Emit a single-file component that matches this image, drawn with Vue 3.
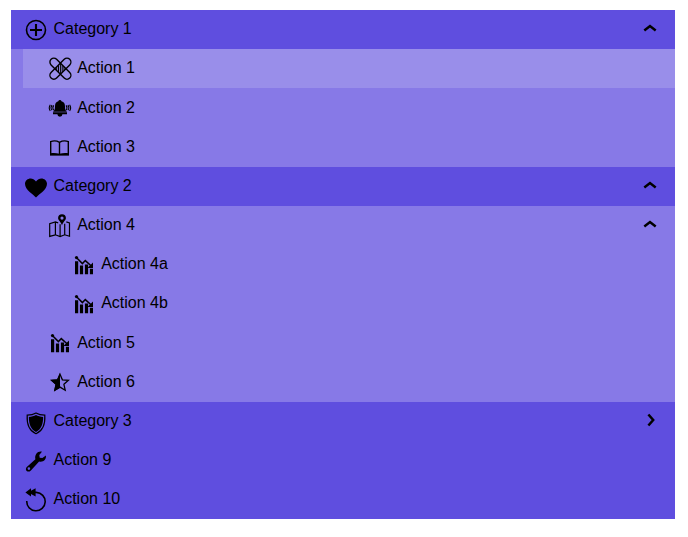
<script setup>
const rows = [
  { label: 'Category 1', icon: 'plus', level: 0, top: true, chevron: 'up' },
  { label: 'Action 1', icon: 'bandage', level: 1, active: true },
  { label: 'Action 2', icon: 'bell', level: 1 },
  { label: 'Action 3', icon: 'book', level: 1 },
  { label: 'Category 2', icon: 'heart', level: 0, top: true, chevron: 'up' },
  { label: 'Action 4', icon: 'map', level: 1, chevron: 'up' },
  { label: 'Action 4a', icon: 'chart', level: 2 },
  { label: 'Action 4b', icon: 'chart', level: 2 },
  { label: 'Action 5', icon: 'chart', level: 1 },
  { label: 'Action 6', icon: 'star', level: 1 },
  { label: 'Category 3', icon: 'shield', level: 0, top: true, chevron: 'right' },
  { label: 'Action 9', icon: 'wrench', level: 0, top: true },
  { label: 'Action 10', icon: 'undo', level: 0, top: true },
]
</script>

<template>
  <nav class="menu">
    <div
      v-for="row in rows"
      :key="row.label"
      class="row"
      :class="['level-' + row.level, { top: row.top, active: row.active }]"
    >
      <div class="item">
        <svg class="icon" viewBox="0 0 24 24" fill="none" stroke="#000">
          <g v-if="row.icon === 'plus'">
            <circle cx="12" cy="12" r="9.5" stroke-width="1.6" />
            <path d="M12 6v12M6 12h12" stroke-width="2.1" />
          </g>
          <g v-else-if="row.icon === 'bandage'" stroke-width="1.4">
            <rect x="-.8" y="7.8" width="26.4" height="7.8" rx="3.9" transform="rotate(45 12.4 11.7)" />
            <rect x="-.8" y="7.8" width="26.4" height="7.8" rx="3.9" transform="rotate(-45 12.4 11.7)" />
            <path d="M8.7 10v3.4M10.5 8.2v7M12.4 6.5v10.4M14.2 8.2v7M16 10v3.4" stroke-width="1" />
          </g>
          <g v-else-if="row.icon === 'bell'">
            <path d="M10.3 5.2a1.7 1.7 0 0 1 3.2 0c2.5.7 3.5 2.4 3.5 5.2 0 2.7.3 3.8 2 5.3H5c1.6-1.5 2-2.6 2-5.3 0-2.8.9-4.5 3.3-5.2z" fill="#000" stroke="none" />
            <path d="M5 16.3h14v2H5zM9.4 18.2h5a2.5 2.5 0 0 1-5 0z" fill="#000" stroke="none" />
            <path d="M5.7 9.4c-1 1.4-1 3.4 0 4.8M4 9.2c-1.1 1.4-1.1 3.6 0 5M2.3 8.7c-1.3 1.9-1.3 4.3 0 6.2M18.1 9.4c1 1.4 1 3.4 0 4.8M19.9 9.2c1.1 1.4 1.1 3.6 0 5M21.6 8.7c1.3 1.9 1.3 4.3 0 6.2" stroke-width="1.1" />
          </g>
          <g v-else-if="row.icon === 'book'">
            <path d="M2.7 6.6c3-1.1 6.1-.8 8.8.7 2.7-1.5 5.8-1.8 8.8-.7v13H2.7zM11.5 7.3v12" stroke-width="1.4" />
            <path d="M2 18.4c3.2-.8 6.4-.5 9.5.4 3.1-.9 6.3-1.2 9.5-.4v2.2H2z" fill="#000" stroke="none" />
          </g>
          <path v-else-if="row.icon === 'heart'" d="M12 22.6C9.8 19.7 1 15.2 1 8.8 1 3.4 8.4 1 12 6.5 15.6 1 23 3.4 23 8.8c0 6.4-8.8 10.9-11 13.8z" fill="#000" stroke="none" />
          <g v-else-if="row.icon === 'map'">
            <path d="M10.2 8.8L7.4 8 1.7 9.7v12.7l5.7-1.6 4.7 1.7 4.6-1.7 4.8 1.5V8.9l-3.2-1M7.4 8v12.8M12.1 10.3v12.2M16.7 9.8v11" stroke-width="1.2" />
            <path d="M14 .2a3.9 3.9 0 0 0-3.9 3.9c0 2.6 3.1 3.8 3.9 7.5.8-3.7 3.9-4.9 3.9-7.5A3.9 3.9 0 0 0 14 .2zm0 2.3a1.6 1.6 0 1 1 0 3.2 1.6 1.6 0 0 1 0-3.2z" fill="#000" fill-rule="evenodd" stroke="none" />
          </g>
          <g v-else-if="row.icon === 'chart'">
            <path d="M3 8.3h3.2v12.9H3zM7.9 12.4h3.2v8.8H7.9zM12.9 11.6h3.2v9.6h-3.2zM17.9 15.7h3.1v5.5h-3.1z" fill="#000" stroke="none" />
            <path d="M4.4 4.4l6 6.2 2.9-3 6 5.4" stroke-width="1.5" />
            <circle cx="4.5" cy="4.6" r="1.6" fill="#000" stroke="none" />
            <path d="M21 9.4v5.6h-5.6z" fill="#000" stroke="none" />
          </g>
          <g v-else-if="row.icon === 'star'">
            <path d="M12 4.2l2.4 5.6 6 .5-4.5 4 1.3 5.9-5.2-3.1-5.2 3.1 1.3-5.9-4.5-4 6-.5z" stroke-width="1.3" />
            <path d="M12 3L9.2 9.3l-6.8.6 5.1 4.6L6 21.4l6-3.7z" fill="#000" stroke="none" />
          </g>
          <g v-else-if="row.icon === 'shield'">
            <path d="M12 3.1C9.7 4.5 6.5 5.2 3.2 5.2c-.5 8 1.7 15.3 8.8 18.5 7.1-3.2 9.3-10.5 8.8-18.5-3.3 0-6.5-.7-8.8-2.1z" stroke-width="1.2" />
            <path d="M12 5C10.1 6.1 7.5 6.8 4.9 6.9c-.1 6.8 1.7 12.3 7.1 15 5.4-2.7 7.2-8.2 7.1-15C16.5 6.8 13.9 6.1 12 5z" fill="#000" stroke="none" />
          </g>
          <path v-else-if="row.icon === 'wrench'" d="M17.9 2.7l-2.6 3.4.4 2.6 2.7.3 3.5-2.4c.7 4.5-3.1 6.9-6.8 5.9L6.9 21.4c-2.9 3.1-6.7-.3-4.1-3.5l8.6-7.6c-1.1-4.6 2.4-8.5 6.5-7.6zM4.9 18.3a1.3 1.3 0 1 0 0 2.6 1.3 1.3 0 0 0 0-2.6z" fill="#000" fill-rule="evenodd" stroke="none" />
          <g v-else-if="row.icon === 'undo'">
            <path d="M11 4.4h1.3A9.2 9.2 0 1 1 2.8 13" stroke-width="1.6" />
            <path d="M1.4 4.4L7 .2v2.6L11.6.2v8.4L7 6v2.6z" fill="#000" stroke="none" />
          </g>
        </svg>
        <span class="label">{{ row.label }}</span>
        <svg v-if="row.chevron" class="chevron" viewBox="0 0 16 16" fill="none" stroke="#000" stroke-width="2.5">
          <path v-if="row.chevron === 'up'" d="M2.3 10.4L8 6l5.7 4.4" />
          <path v-else d="M6.4 2.5L11.2 8l-4.8 5.5" />
        </svg>
      </div>
    </div>
  </nav>
</template>

<style>
body {
  background: #fff;
}
</style>

<style scoped>
.menu {
  width: 664px;
  margin: 10px 0 0 11px;
  font-family: "Liberation Sans", Arial, sans-serif;
  font-size: 16px;
  color: #000;
  background: #8779e7;
}
.row {
  height: 39.16px;
  display: flex;
}
.top {
  background: #5f4edf;
}
.level-1 {
  padding-left: 12px;
}
.level-2 {
  padding-left: 36px;
}
.item {
  flex: 1;
  display: flex;
  align-items: flex-start;
  padding: 8px 17px 0 13px;
}
.level-1 .item,
.level-2 .item {
  padding-left: 25px;
}
.active .item {
  background: #998eea;
}
.icon {
  width: 24px;
  height: 24px;
  flex: none;
  overflow: visible;
}
.label {
  flex: 1;
  margin: 0.3px 0 0 5.5px;
  line-height: 22px;
}
.level-1 .label,
.level-2 .label {
  margin-left: 5.2px;
}
.chevron {
  width: 16px;
  height: 16px;
  margin-top: 2.3px;
}
</style>
